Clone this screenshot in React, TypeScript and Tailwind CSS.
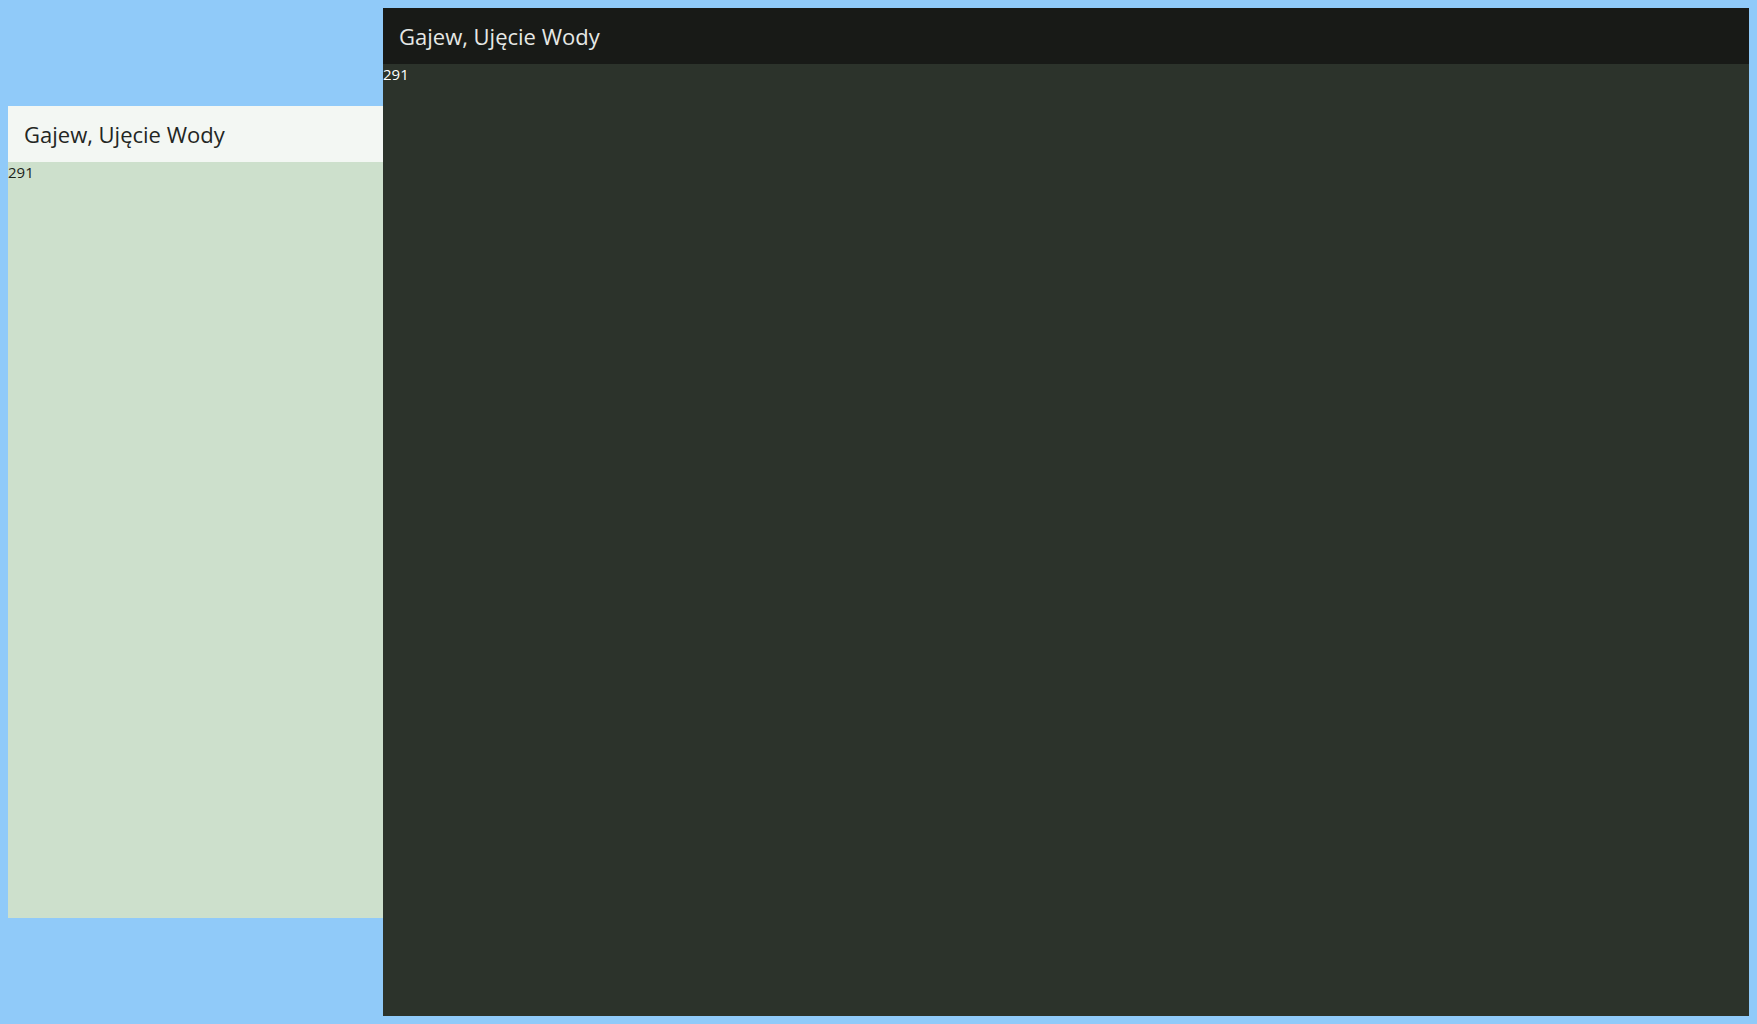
import React from "react"

type Theme = "light" | "dark"

const Panel = ({ theme, className }: { theme: Theme; className: string }) => {
  const dark = theme === "dark"
  return (
    <div className={`flex flex-col shrink-0 ${dark ? "bg-[#2c332b] text-white" : "bg-[#cde0cc] text-[#1b241b]"} ${className}`}>
      <div
        className={`h-[56px] shrink-0 flex items-center px-4 text-[22px] ${
          dark ? "bg-[#181a17] text-[#e6e8e5]" : "bg-[#f3f7f3] text-[#232623]"
        }`}
      >
        Gajew, Ujęcie Wody
      </div>
      <div className="text-[15px] leading-[normal]">291</div>
    </div>
  )
}

export default function App() {
  return (
    <div
      className="w-full h-screen bg-[#90caf9] p-2 flex items-center overflow-hidden"
      style={{ fontFamily: '"Open Sans", "Noto Sans", sans-serif' }}
    >
      <Panel theme="light" className="w-[375px] h-[812px]" />
      <Panel theme="dark" className="w-[1366px] h-full" />
    </div>
  )
}
